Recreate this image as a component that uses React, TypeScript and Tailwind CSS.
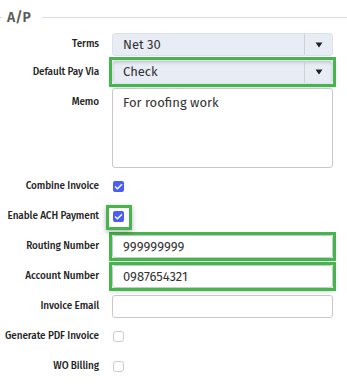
import { useState } from 'react'

const GREEN = 'outline-[3px] outline-solid outline-[#44b64b] shadow-[0_2px_5px_rgba(0,0,0,0.35)]'

function Label({ children, top }: { children: React.ReactNode; top?: boolean }) {
  return (
    <div
      className={`w-[100px] shrink-0 whitespace-nowrap pr-[1px] text-right text-[10px] font-medium tracking-[-0.1px] text-[#222] ${
        top ? 'self-start pt-[7px]' : ''
      }`}
    >
      {children}
    </div>
  )
}

function Arrow() {
  return (
    <svg width="8" height="6" viewBox="0 0 8 6">
      <path d="M0.5 0.5 H7.5 L4 5.5 Z" fill="#222" />
    </svg>
  )
}

function Select({ value, highlight }: { value: string; highlight?: boolean }) {
  return (
    <div className={`h-full w-[221px] ${highlight ? GREEN : ''}`}>
      <div
        className={`flex h-full items-center rounded-[3px] border border-[#dde2ea] bg-[#e8edf5] ${
          highlight ? 'shadow-[inset_0_2px_3px_rgba(0,0,0,0.15)]' : ''
        }`}
      >
        <span className="flex-1 pl-[10px] text-[13px] text-[#333]">{value}</span>
        <span className="h-full w-px bg-[#cdd1d8]" />
        <span className="flex w-[27px] justify-center">
          <Arrow />
        </span>
      </div>
    </div>
  )
}

function Input({ value, highlight }: { value?: string; highlight?: boolean }) {
  return (
    <div className={`h-full w-[221px] ${highlight ? GREEN : ''}`}>
      <div className="flex h-full items-center rounded-[3px] border border-[#c9c9c9] bg-white pl-[10px] text-[13px] text-[#333]">
        {value}
      </div>
    </div>
  )
}

function Check({ checked }: { checked: boolean }) {
  return checked ? (
    <span className="flex h-[11px] w-[11px] items-center justify-center rounded-[2px] bg-[#4a5ff0]">
      <svg width="9" height="7" viewBox="0 0 9 7">
        <path d="M1 3.6 L3.4 5.8 L8 1.2" fill="none" stroke="white" strokeWidth="1.4" />
      </svg>
    </span>
  ) : (
    <span className="h-[11px] w-[11px] rounded-[3px] border border-[#c8ccd4] bg-white" />
  )
}

export default function App() {
  const [combine] = useState(true)

  return (
    <div className="h-[384px] w-[347px] bg-white font-['Fira_Sans','Lato',sans-serif]">
      {/* Legend */}
      <div className="flex h-[26px] items-center pt-[9px]">
        <span className="h-px w-[2px] bg-[#d6dbf2]" />
        <span className="px-[5px] text-[14px] font-semibold text-[#5b5b5b]">A/P</span>
        <span className="ml-[6px] h-px flex-1 bg-[#d6dbf2]" />
      </div>

      <div className="flex flex-col pt-[7px]">
        <div className="flex h-[23px] items-center gap-[12px]">
          <Label>Terms</Label>
          <Select value="Net 30" />
        </div>
        <div className="mt-[4px] flex h-[24px] items-center gap-[12px]">
          <Label>Default Pay Via</Label>
          <Select value="Check" highlight />
        </div>
        <div className="mt-[4px] flex h-[80px] gap-[12px]">
          <Label top>Memo</Label>
          <div className="h-full w-[221px] rounded-[3px] border border-[#c9c9c9] bg-white px-[10px] pt-[4px] text-[13px] text-[#333]">
            For roofing work
          </div>
        </div>
        <div className="mt-[7px] flex h-[23px] items-center gap-[13px]">
          <Label>Combine Invoice</Label>
          <Check checked={combine} />
        </div>
        <div className="mt-[7px] flex h-[23px] items-center gap-[13px]">
          <Label>Enable ACH Payment</Label>
          <span className="relative flex">
            <Check checked />
            <span className="absolute left-[-7px] top-[-6px] h-[25px] w-[26px] border-[3px] border-[#44b64b] shadow-[0_2px_5px_rgba(0,0,0,0.3)]" />
          </span>
        </div>
        <div className="mt-[7px] flex h-[23px] items-center gap-[12px]">
          <Label>Routing Number</Label>
          <Input value="999999999" highlight />
        </div>
        <div className="mt-[7px] flex h-[23px] items-center gap-[12px]">
          <Label>Account Number</Label>
          <Input value="0987654321" highlight />
        </div>
        <div className="mt-[7px] flex h-[23px] items-center gap-[12px]">
          <Label>Invoice Email</Label>
          <Input />
        </div>
        <div className="mt-[7px] flex h-[23px] items-center gap-[13px]">
          <Label>Generate PDF Invoice</Label>
          <Check checked={false} />
        </div>
        <div className="mt-[7px] flex h-[23px] items-center gap-[13px]">
          <Label>WO Billing</Label>
          <Check checked={false} />
        </div>
      </div>
    </div>
  )
}
